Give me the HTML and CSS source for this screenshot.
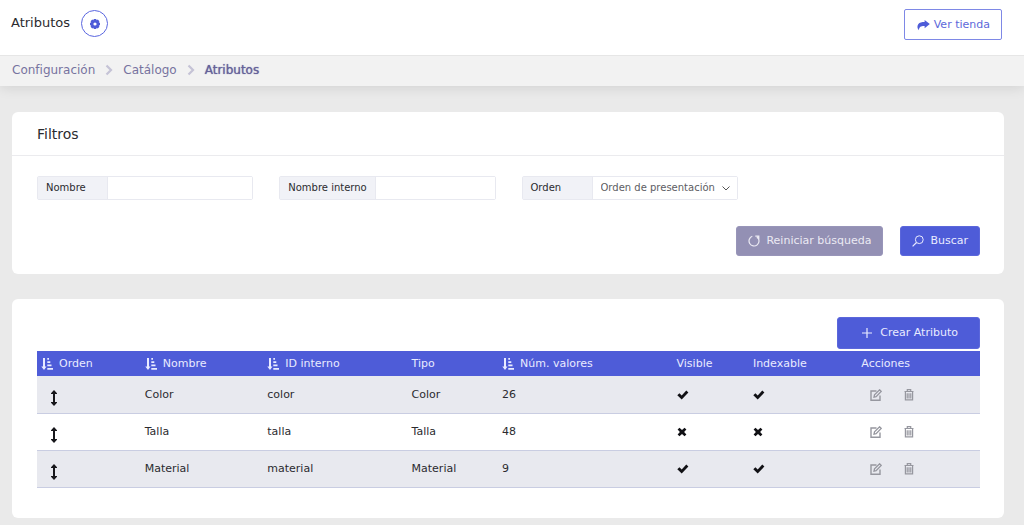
FILE: index.html
```html
<!DOCTYPE html>
<html lang="es">
<head>
<meta charset="utf-8">
<title>Atributos</title>
<link rel="stylesheet" href="styles.css">
</head>
<body>
<svg class="sprite" aria-hidden="true">
  <symbol id="sort" viewBox="0 0 12 12"><path d="M2 0h2v8.500h1.500L3 12 .3 8.500H2zM6.300 0h1.700v1.700H6.300zM6.300 3.300h3v1.700h-3zM6.300 6.600h4.200v1.700H6.300zM6.300 10H12v1.700H6.300z"/></symbol>
  <symbol id="chevron" viewBox="0 0 8 12"><path d="M1.500 1.500 6 6l-4.500 4.500" fill="none" stroke="currentColor" stroke-width="2.200"/></symbol>
  <symbol id="move" viewBox="0 0 8 16"><path d="M4 0 7 3.200V4H5v8h2v.8L4 16 1 12.800V12h2V4H1v-.8z"/></symbol>
  <symbol id="check" viewBox="0 0 12 10"><path d="M.3 5.300 2.400 3.300l2.300 2.100L9.300.6l2.100 2-6.700 6.900z"/></symbol>
  <symbol id="cross" viewBox="0 0 10 10"><path d="M2.500.8 5 3 7.500.8l1.900 1.800L7.100 5l2.300 2.400-1.900 1.800L5 7 2.500 9.200.6 7.400 2.900 5 .6 2.600z"/></symbol>
  <symbol id="edit" viewBox="0 0 12 12"><path d="M6.500 2H1v9.200h9V6.500" fill="none" stroke="currentColor" stroke-width="1.400"/><path d="m4 8.200.5-2.300L9.600.8l1.600 1.600-5.100 5.200z" fill="none" stroke="currentColor" stroke-width="1.300"/></symbol>
  <symbol id="trash" viewBox="0 0 10 12"><path d="M.5 2.500h9M3.300 2.200V.7h3.400v1.500M1.400 2.800v8.100h7.200V2.800M3.200 4.300v5.200M5 4.300v5.200M6.800 4.300v5.200" fill="none" stroke="currentColor" stroke-width="1.200"/></symbol>
</svg>

<header class="topbar">
  <h1 class="page-title">Atributos</h1>
  <button class="gear-button" type="button" aria-label="Opciones">
    <svg class="icon-gear" viewBox="0 0 10 10"><path fill-rule="evenodd" d="M3.800 0h2.400l.4 1.200 1.200-.6 1.600 1.600-.6 1.200 1.200.4v2.400l-1.200.4.6 1.200-1.600 1.600-1.200-.6L6.200 10H3.800l-.4-1.200-1.200.6L.6 7.800l.6-1.200L0 6.200V3.800l1.200-.4L.6 2.200 2.200.6l1.200.6zM5 3.400a1.600 1.600 0 1 0 0 3.200 1.600 1.600 0 0 0 0-3.200z"/></svg>
  </button>
  <a class="store-link" href="#">
    <svg class="icon-share" viewBox="0 0 14 12"><path d="M8.200.5 13.800 5 8.200 9.600V7C4.500 6.900 2.300 7.600 2 11.700.2 9.800 0 7.200 1.300 5.200 2.700 3 5.300 2.700 8.200 2.700z"/></svg>
    Ver tienda
  </a>
</header>

<nav class="breadcrumb" aria-label="Ruta">
  <a href="#">Configuración</a>
  <svg class="icon-chevron"><use href="#chevron"/></svg>
  <a href="#">Catálogo</a>
  <svg class="icon-chevron"><use href="#chevron"/></svg>
  <a class="current" href="#" aria-current="page">Atributos</a>
</nav>

<main class="content">
  <section class="card">
    <h2 class="card-title">Filtros</h2>
    <form class="filters">
      <div class="fields">
        <div class="field"><label for="name">Nombre</label><input id="name" type="text"></div>
        <div class="field"><label for="internal">Nombre interno</label><input id="internal" type="text"></div>
        <div class="field"><label for="order">Orden</label><select id="order"><option>Orden de presentación</option></select></div>
      </div>
      <div class="buttons">
        <button class="button muted" type="reset">
          <svg class="icon-button" viewBox="0 0 12 12"><path d="M4.300 1.300a5 5 0 1 0 5 .9M7.300 1.200h3.500v3.500M10.600 1.400 8.800 3.200" fill="none" stroke="currentColor" stroke-width="1.200"/></svg>
          Reiniciar búsqueda
        </button>
        <button class="button" type="submit">
          <svg class="icon-button" viewBox="0 0 12 12"><circle cx="7.300" cy="4.700" r="3.900" fill="none" stroke="currentColor"/><path d="M4.500 7.500.6 11.400" stroke="currentColor" stroke-width="1.200"/></svg>
          Buscar
        </button>
      </div>
    </form>
  </section>

  <section class="card list">
    <button class="button create" type="button">
      <svg class="icon-plus" viewBox="0 0 10 10"><path d="M5 0v10M0 5h10" stroke="currentColor" stroke-width="1.200"/></svg>
      Crear Atributo
    </button>
    <table class="attributes">
      <colgroup><col class="c-order"><col class="c-name"><col class="c-id"><col class="c-type"><col class="c-values"><col class="c-visible"><col class="c-index"><col class="c-actions"></colgroup>
      <thead>
        <tr>
          <th scope="col"><svg class="icon-sort"><use href="#sort"/></svg>Orden</th>
          <th scope="col"><svg class="icon-sort"><use href="#sort"/></svg>Nombre</th>
          <th scope="col"><svg class="icon-sort"><use href="#sort"/></svg>ID interno</th>
          <th scope="col">Tipo</th>
          <th scope="col"><svg class="icon-sort"><use href="#sort"/></svg>Núm. valores</th>
          <th scope="col">Visible</th>
          <th scope="col">Indexable</th>
          <th scope="col">Acciones</th>
        </tr>
      </thead>
      <tbody>
        <tr>
          <td class="handle"><svg class="icon-move"><use href="#move"/></svg></td><td>Color</td><td>color</td><td>Color</td><td>26</td>
          <td><svg class="icon-check" role="img" aria-label="Sí"><use href="#check"/></svg></td>
          <td><svg class="icon-check" role="img" aria-label="Sí"><use href="#check"/></svg></td>
          <td><div class="actions"><button type="button" aria-label="Editar"><svg class="icon-edit"><use href="#edit"/></svg></button><button type="button" aria-label="Eliminar"><svg class="icon-trash"><use href="#trash"/></svg></button></div></td>
        </tr>
        <tr>
          <td class="handle"><svg class="icon-move"><use href="#move"/></svg></td><td>Talla</td><td>talla</td><td>Talla</td><td>48</td>
          <td><svg class="icon-cross" role="img" aria-label="No"><use href="#cross"/></svg></td>
          <td><svg class="icon-cross" role="img" aria-label="No"><use href="#cross"/></svg></td>
          <td><div class="actions"><button type="button" aria-label="Editar"><svg class="icon-edit"><use href="#edit"/></svg></button><button type="button" aria-label="Eliminar"><svg class="icon-trash"><use href="#trash"/></svg></button></div></td>
        </tr>
        <tr>
          <td class="handle"><svg class="icon-move"><use href="#move"/></svg></td><td>Material</td><td>material</td><td>Material</td><td>9</td>
          <td><svg class="icon-check" role="img" aria-label="Sí"><use href="#check"/></svg></td>
          <td><svg class="icon-check" role="img" aria-label="Sí"><use href="#check"/></svg></td>
          <td><div class="actions"><button type="button" aria-label="Editar"><svg class="icon-edit"><use href="#edit"/></svg></button><button type="button" aria-label="Eliminar"><svg class="icon-trash"><use href="#trash"/></svg></button></div></td>
        </tr>
      </tbody>
    </table>
  </section>
</main>
</body>
</html>
```
FILE: styles.css
```css
* { box-sizing: border-box; }
body {
  margin: 0;
  background: #eaeaea;
  color: #2b2b2f;
  font: 11px/16px "DejaVu Sans", Verdana, sans-serif;
}
button, input, select { font: inherit; }
button { cursor: pointer; }
a { text-decoration: none; }
svg { fill: currentColor; flex: none; }
.sprite { display: none; }

.topbar {
  display: flex;
  align-items: flex-start;
  gap: 11px;
  padding: 9px 22px 15px 11px;
  background: #fff;
}
.page-title { margin: 6px 0 0; font-size: 13px; font-weight: 400; line-height: 16px; }
.gear-button {
  display: grid;
  place-items: center;
  width: 27px;
  height: 27px;
  margin-top: 1px;
  padding: 0;
  border: 1px solid #5a66e0;
  border-radius: 50%;
  background: #fff;
  color: #4e5cd8;
}
.icon-gear { width: 10px; height: 10px; }
.store-link {
  display: flex;
  align-items: center;
  gap: 4px;
  height: 31px;
  margin-left: auto;
  padding: 0 11px 0 12px;
  border: 1px solid #7e88e6;
  border-radius: 2px;
  color: #5c68da;
}
.icon-share { width: 13px; height: 12px; color: #4e5cd8; }

.breadcrumb {
  display: flex;
  align-items: center;
  gap: 10px;
  height: 31px;
  padding: 0 12px 2px;
  border-top: 1px solid #e6e6e6;
  background: #f2f2f2;
  box-shadow: 0 1px 14px rgba(0, 0, 0, .12);
  clip-path: inset(0 0 -20px);
  font-size: 12px;
}
.breadcrumb a { color: #77739f; }
.breadcrumb .current { color: #66629a; text-shadow: 0 0 1px #66629a; }
.icon-chevron { width: 8px; height: 12px; color: #c5c3d6; }

.content { display: grid; gap: 25px; padding: 26px 20px 7px 12px; }
.card { border-radius: 6px; background: #fff; }
.card-title {
  margin: 0;
  padding: 13px 25px 12px;
  border-bottom: 1px solid #ebebee;
  font-size: 14px;
  font-weight: 400;
  line-height: 18px;
}
.filters { padding: 20px 24px 18px 25px; }
.fields { display: grid; grid-template-columns: repeat(4, minmax(0, 1fr)); gap: 26px; }
.field {
  display: flex;
  height: 24px;
  border: 1px solid #e8e9f0;
  border-radius: 2px;
  font-size: 10px;
}
.field label {
  min-width: 70px;
  padding: 0 8px;
  border-right: 1px solid #e8e9f0;
  background: #f1f2f7;
  line-height: 22px;
  white-space: nowrap;
}
.field input, .field select {
  flex: 1;
  min-width: 0;
  padding: 0 8px;
  border: 0;
  background: #fff;
  color: #5d5d63;
}
.field select {
  appearance: none;
  background: #fff url("data:image/svg+xml,%3Csvg xmlns='http://www.w3.org/2000/svg' viewBox='0 0 8 5'%3E%3Cpath d='M.5.5 4 4 7.500.5' fill='none' stroke='%23555'/%3E%3C/svg%3E") no-repeat right 7px center / 8px 5px;
}
.buttons { display: flex; justify-content: flex-end; gap: 17px; margin-top: 26px; }
.button {
  display: flex;
  align-items: center;
  justify-content: center;
  gap: 6px;
  height: 30px;
  padding: 0 11px;
  border: 1px solid #5b67db;
  border-radius: 3px;
  background: #4e5cd8;
  color: #e9ebff;
}
.button.muted { border-color: #9895b9; background: #9390b4; color: #ebeaf3; }
.icon-button { width: 12px; height: 12px; }

.list { padding: 18px 24px 30px 25px; }
.button.create { gap: 8px; height: 32px; margin: 0 0 2px auto; padding: 0 21px 0 24px; }
.icon-plus { width: 10px; height: 10px; }
.attributes { width: 100%; border-collapse: collapse; table-layout: fixed; }
.c-order { width: 11%; }
.c-name { width: 13%; }
.c-id { width: 15.3%; }
.c-type { width: 9.6%; }
.c-values { width: 18.5%; }
.c-visible { width: 8.100%; }
.c-index { width: 11.500%; }
.c-actions { width: 13%; }
.attributes th, .attributes td { padding: 0 4px; text-align: left; white-space: nowrap; }
.attributes th { height: 25px; background: #4e5cd8; color: #e9ebff; font-weight: 400; }
.attributes td { height: 37px; padding-top: 1px; border-bottom: 1px solid #c9cde2; vertical-align: middle; }
.attributes tbody tr:nth-child(odd) { background: #e8e9ef; }
.attributes svg { vertical-align: middle; }
.icon-sort { width: 12px; height: 12px; margin-right: 6px; }
.attributes .handle { padding: 7px 0 0 13px; }
.icon-move { display: block; width: 8px; height: 16px; color: #17171b; }
.icon-check { width: 12px; height: 10px; color: #111115; }
.icon-cross { width: 10px; height: 10px; color: #111115; }
.actions { display: flex; align-items: center; gap: 22px; padding-left: 9px; }
.actions button { display: flex; padding: 0; border: 0; background: none; color: #96979f; }
.icon-edit { width: 12px; height: 12px; }
.icon-trash { width: 10px; height: 12px; }
```
